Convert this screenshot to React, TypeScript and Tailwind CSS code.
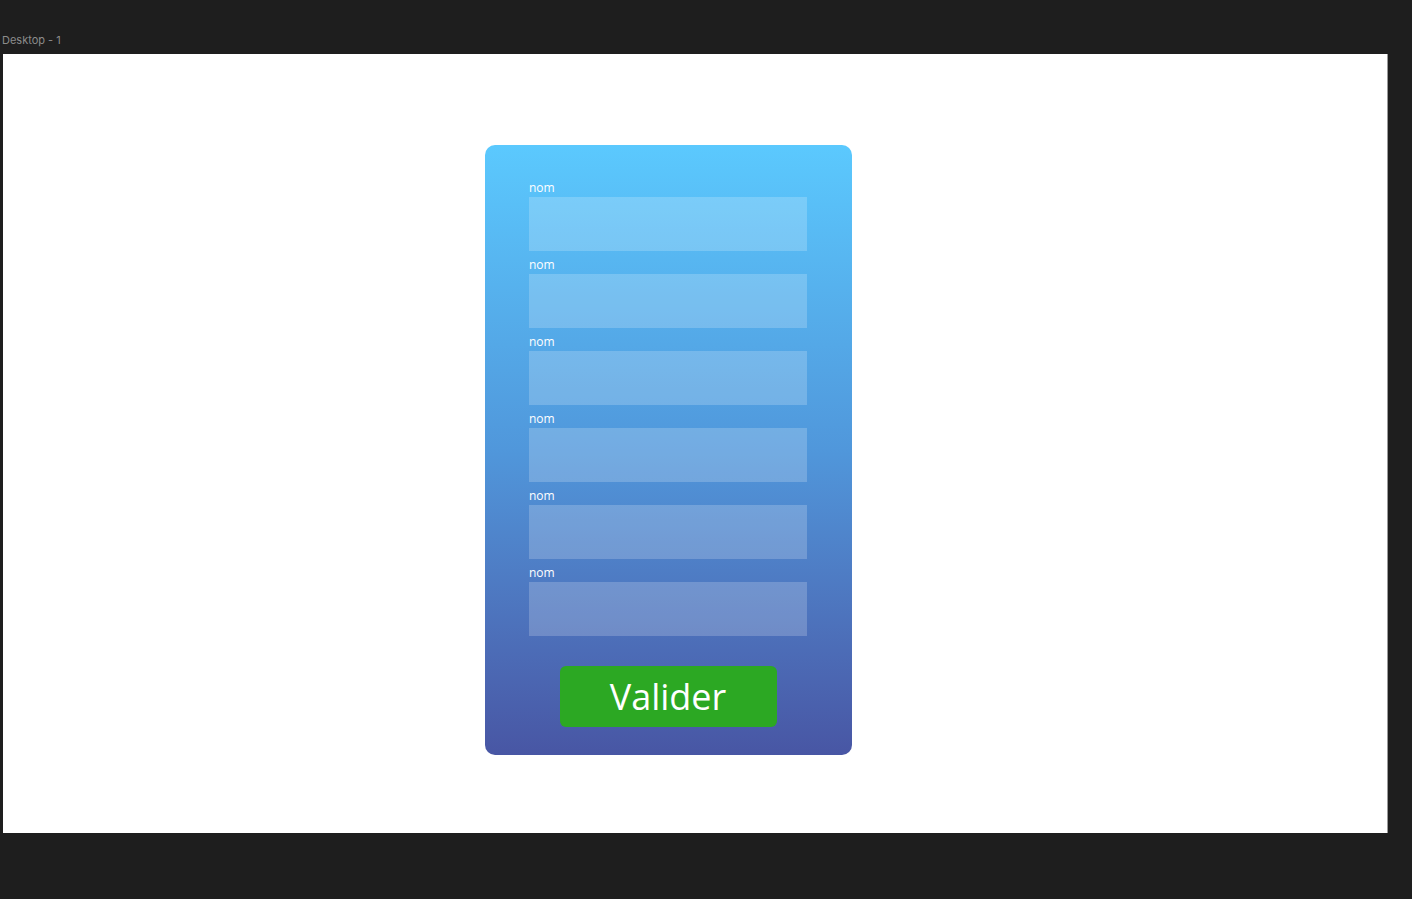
export default function App() {
  const fields = ["nom", "nom", "nom", "nom", "nom", "nom"];

  return (
    <div className="min-h-screen w-full bg-[#1e1e1e] pl-[3px] pt-[34px] pr-[24px]" style={{ fontFamily: "Inter, 'Noto Sans', sans-serif" }}>
      {/* Frame title */}
      <div className="h-[20px] text-[11px] leading-[12px] text-[#8c8c8c] -ml-[1px]">Desktop - 1</div>

      {/* Frame canvas */}
      <div className="h-[779px] w-[1385px] border-r border-[#9a9a9a] bg-white pt-[91px] pl-[482px]">
        <div className="flex w-[367px] flex-col rounded-[10px] bg-gradient-to-b from-[#5bc9fe] via-[#5097db] to-[#4856a4] pt-[33px] pb-[28px]">
          <div className="flex flex-col gap-[4px] px-[44px]">
            {fields.map((label, i) => (
              <div key={i} className="flex flex-col gap-[2px]">
                <span className="pt-[3px] text-[12px] leading-[14px] text-white" style={{ fontFamily: "'Open Sans', sans-serif" }}>{label}</span>
                <div className="h-[54px] w-[278px] bg-white/20" />
              </div>
            ))}
          </div>
          <div className="mt-[30px] flex justify-center pr-[1px]">
            <button className="flex h-[61px] w-[217px] items-center justify-center rounded-[6px] bg-[#2ca823] text-[36px] text-white" style={{ fontFamily: "'Open Sans', sans-serif" }}>
              Valider
            </button>
          </div>
        </div>
      </div>
    </div>
  );
}
